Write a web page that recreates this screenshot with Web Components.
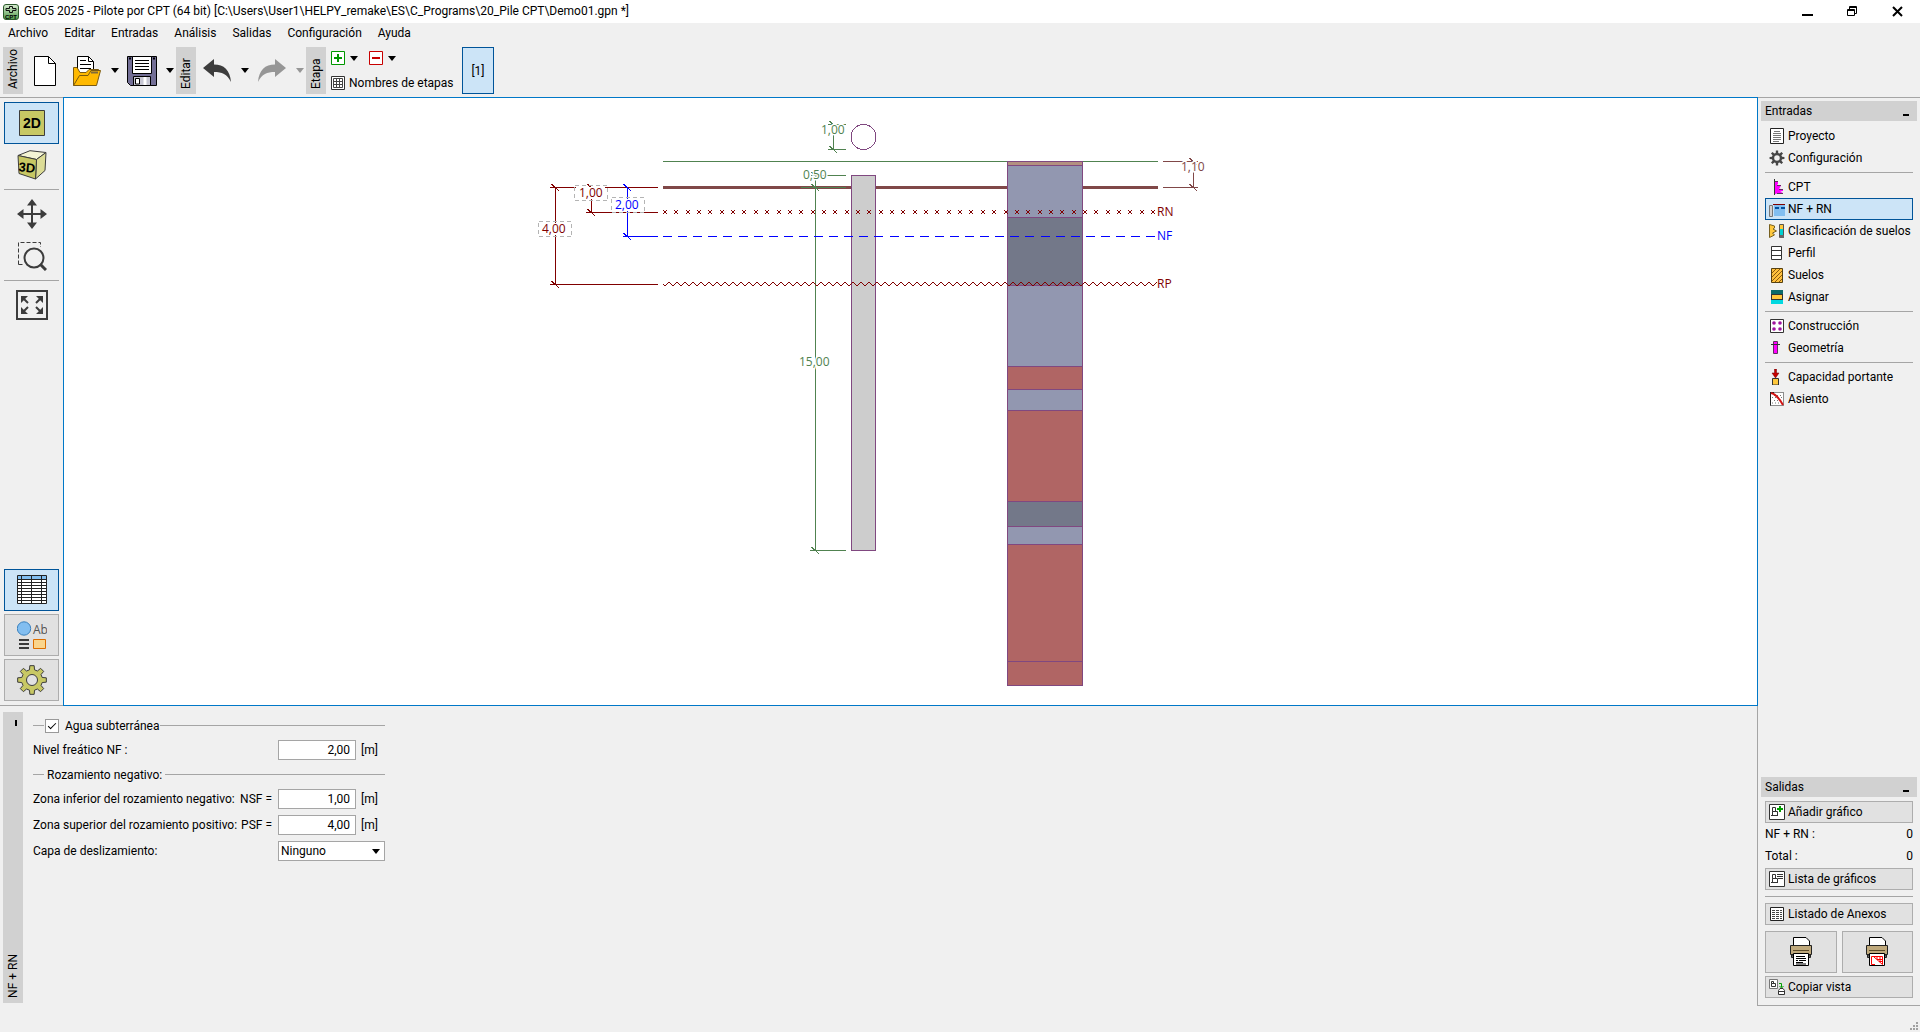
<!DOCTYPE html>
<html lang="es">
<head>
<meta charset="utf-8">
<title>GEO5 2025 - Pilote por CPT</title>
<style>
html,body{margin:0;height:100%}
body{font:12px/16px Roboto,"Open Sans",sans-serif;color:#000;background:#f0f0f0;overflow:hidden;
--line:#a5a5a5;--bar:#d1d1d1;--btn:#e1e1e1;--btn-line:#adadad;--sel:#cce4f7;--sel-line:#005499;--accent:#0078c8}
</style>
</head>
<body>
<geo-app></geo-app>
<script>
const gear=(c,ro,ri,n)=>{let p='';for(let i=0;i<n;i++){const a=i*2*Math.PI/n-Math.PI/2,s=Math.PI/n;
 [[-.62,ri],[-.38,ro],[.38,ro],[.62,ri]].forEach(([k,r])=>{p+=(p?'L':'M')+(c+r*Math.cos(a+k*s)).toFixed(2)+' '+(c+r*Math.sin(a+k*s)).toFixed(2)})}return p+'Z'};
const printer=inner=>`<path d="M4.5 9V.5H17L20.500 4V9" fill="#fff" stroke="#000"/><path d="M1.500 8.500H22.500V17.500H1.500Z" fill="#bfa97c" stroke="#222"/><path d="M4 13.500H20" stroke="#5a4a28"/><path d="M2.500 18V20.500H21.500V18Z" fill="#666" stroke="#222"/><path d="M4.500 16.500H19.500V28.500H4.500Z" fill="#fff" stroke="#000"/>${inner}`;
const ICONS={
app:[16,16,'<defs><linearGradient id="g" x2="0" y2="1"><stop offset="0" stop-color="#d9ecd2"/><stop offset="1" stop-color="#4f9a4a"/></linearGradient></defs><rect x=".5" y=".5" width="15" height="15" rx="2.500" fill="url(#g)" stroke="#2c5a2c"/><path d="M6.500 2.500H9.500V4.500H13M6.500 2.500V4.500H3V6.500H6.500V8.500H9.500V6.500H13V4.500" fill="none" stroke="#111"/><text x="8" y="14.500" font-size="6" font-weight="700" text-anchor="middle" font-family="Liberation Sans">CPT</text>'],
min:[11,11,'<path d="M0 9H11" stroke="#000" stroke-width="2"/>'],
restore:[11,11,'<path d="M.5 3.500H7.500V9.500H.5ZM.5 4.500H7.500M2.500 3V.5H9.500V7.500H8M2.500 1.500H9.500" fill="none" stroke="#000"/>'],
close:[11,11,'<path d="M1 1L10 10M10 1L1 10" stroke="#000" stroke-width="2"/>'],
caret:[8,5,'<path d="M0 0H8L4 5Z" fill="currentColor"/>'],
neu:[22,30,'<path d="M.5 .5H14.500L21.500 7.500V29.500H.5Z" fill="#fff" stroke="#000"/><path d="M14.500 .5V7.500H21.500" fill="none" stroke="#000"/>'],
open:[28,30,'<path d="M4.500 17V.5H15.500L20.500 5.500V17Z" fill="#fff" stroke="#000"/><path d="M15.500 .5V5.500H20.500M7 4.500H13M7 8.500H18M7 12.500H18" fill="none" stroke="#000"/><path d="M.5 29.500V11.500H4L7 16.500H13L16 13.500H25.500V18" fill="#ffb900" stroke="#7a5a10"/><path d="M.5 29.500L6.500 19.500H15L18 14.500H27.500L23.500 29.500Z" fill="#ffb900" stroke="#7a5a10"/><path d="M18 16.500H25" stroke="#806a3a" stroke-width="2"/>'],
save:[30,30,'<path d="M.5 .5H29.500V29.500H3.500L.5 26.500Z" fill="#736f96" stroke="#000"/><path d="M5.500 .5H24.500V17.500H5.500Z" fill="#fff" stroke="#000"/><path d="M8 4.500H22M8 7.500H22M8 10.500H22M8 13.500H22" stroke="#000"/><path d="M6.500 29.500V20.500H23.500V29.500Z" fill="#c8c8d4" stroke="#000"/><path d="M8.500 22.500H12.500V28H8.500Z" fill="#fff" stroke="#000"/><path d="M18 21V29" stroke="#fff" stroke-width="3"/><path d="M2 2.500H4M26 2.500H28" stroke="#000" stroke-width="2"/>'],
undo:[28,24,'<path d="M0 9L11 0V5.500C21 5.500 27 11 28 23C24 15 19 13 11 13V18Z" fill="#3c3c3c"/>'],
redo:[28,24,'<path d="M28 9L17 0V5.500C7 5.500 1 11 0 23C4 15 9 13 17 13V18Z" fill="#969696"/>'],
plus:[14,14,'<path d="M.5 .5H13.500V13.500H.5Z" fill="#fff" stroke="#009600"/><path d="M3 7H11M7 3V11" stroke="#009600" stroke-width="2"/>'],
minus:[14,14,'<path d="M.5 .5H13.500V13.500H.5Z" fill="#fff" stroke="#c80000"/><path d="M3 7H11" stroke="#c80000" stroke-width="2"/>'],
names:[14,14,'<path d="M.5 .5H13.500V13.500H.5Z" fill="#fff" stroke="#333"/><path d="M2.500 2.500H11.500V11.500H2.500ZM2.500 5.500H11.500M2.500 8.500H11.500M5.500 2.500V11.500M8.500 2.500V11.500" fill="none" stroke="#444"/>'],
d2:[26,26,'<path d="M.5 .5H25.500V25.500H.5Z" fill="#c8c864" stroke="#3c3c3c"/><text x="13" y="18" font-size="14" font-weight="700" text-anchor="middle" font-family="Liberation Sans">2D</text>'],
d3:[30,30,'<g stroke="#3c3c3c" stroke-linejoin="round"><path d="M1 5.500L13 .7L29 2.500L19.500 9.500Z" fill="#f4f4d4"/><path d="M19.500 9.500L29 2.500L28 20.500L18.500 29Z" fill="#dcdc96"/><path d="M1 5.500L19.500 9.500L18.500 29L2 23.500Z" fill="#c8c864"/></g><text x="10" y="22" font-size="13" font-weight="700" text-anchor="middle" font-family="Liberation Sans" transform="rotate(5 10 18)">3D</text>'],
move:[30,30,'<path d="M15 4V26M4 15H26" stroke="#3c3c3c" stroke-width="2"/><path d="M15 0L20 6.500H10ZM15 30L20 23.500H10ZM0 15L6.500 10V20ZM30 15L23.500 10V20Z" fill="#3c3c3c"/>'],
zoom:[30,30,'<path d="M1.500 23.500V1.500H23.500V6M1.500 23.500H7" fill="none" stroke="#3c3c3c" stroke-dasharray="4 2"/><circle cx="17" cy="17" r="9.500" fill="none" stroke="#3c3c3c" stroke-width="2"/><path d="M23 23L29 29" stroke="#3c3c3c" stroke-width="3"/>'],
fit:[32,30,'<path d="M1 1H31V29H1Z" fill="none" stroke="#3c3c3c" stroke-width="2"/><g fill="#3c3c3c"><path d="M5 6H12L5 13ZM27 6H20L27 13ZM5 24H12L5 17ZM27 24H20L27 17Z"/></g><path d="M7 8L12 13M25 8L20 13M7 22L12 17M25 22L20 17" stroke="#3c3c3c" stroke-width="2"/>'],
table:[30,30,'<path d="M.5 .5H29.500V28.500H.5Z" fill="#fff"/><path d="M1 1H29V5H1Z" fill="#82bef0"/><path d="M.5 .5H29.500V28.500H.5ZM.5 4.500H29.500M.5 7.500H29.500M.5 10.500H29.500M.5 13.500H29.500M.5 16.500H29.500M.5 19.500H29.500M.5 22.500H29.500M.5 25.500H29.500M4.500 .5V28.500M14.500 .5V28.500M24.500 .5V28.500" fill="none" stroke="#222"/>'],
style:[30,28,'<circle cx="7" cy="7.500" r="6.700" fill="#82bef0" stroke="#3c82be"/><text x="16" y="13" font-size="12" fill="#555" font-family="Open Sans">Ab</text><path d="M2 19H12M2 23H12M2 27H12" stroke="#3c3c3c" stroke-width="2"/><path d="M16.500 18.500H28.500V27.500H16.500Z" fill="#fad58c" stroke="#dc6e00"/>'],
gear:[30,30,`<path d="${gear(15,14.5,10.5,8)}" fill="#c8c864" stroke="#3c3c3c" stroke-linejoin="round"/><circle cx="15" cy="15" r="5.500" fill="#e1e1e1" stroke="#3c3c3c"/>`],
proyecto:[16,16,'<path d="M1.500 .5H14.500V15.500H1.500Z" fill="#fff" stroke="#222"/><path d="M5 3.500H11M4 5.500H12M4 7.500H12M4 9.500H12M4 11.500H12M4 13.500H10" stroke="#777"/>'],
config:[16,16,`<path fill-rule="evenodd" d="${gear(8,7.5,5.2,8)}M8 5.200A2.800 2.800 0 1 0 8 10.800A2.800 2.800 0 1 0 8 5.200Z" fill="#464646"/>`],
cpt:[16,16,'<path d="M5.500 0V16" stroke="#333"/><path d="M6 2L9 3V5L8 6L12 6.500L11 8.500L10 9.500L14 10.500V12L11 12.500L14 13.500L6 15Z" fill="#f0f"/><path d="M6 2.500H9M8 6.500H12M10 10.500H14M8 14.500H14" stroke="#603060" fill="none"/>'],
nf:[16,16,'<path d="M5 4H16V15H5Z" fill="#82bef0"/><path d="M.5 4.500H3.500V15.500H.5Z" fill="#d0d0d0" stroke="#777"/><path d="M4 3.500H16" stroke="#800000"/><path d="M6 7H10M12 7H16" stroke="#0050a0" stroke-width="2"/>'],
clasif:[16,16,'<path d="M.5 1.500L5.500 3V5L4 6L7.500 8L3.500 10L5.500 12L.5 14.500Z" fill="#ffc83c" stroke="#776020"/><path d="M11 1H15V6H11Z" fill="#ffc83c"/><path d="M11 6H15V12H11Z" fill="#00d2d2"/><path d="M10.500 1.500H14.500V14.500H10.500Z" fill="none" stroke="#555"/><path d="M11 12H15V15H11Z" fill="#666"/>'],
perfil:[16,16,'<path d="M2.500 1.500H12.500V14.500H2.500ZM2.500 5.500H12.500M2.500 10.500H12.500" fill="#fff" stroke="#333"/>'],
suelos:[16,16,'<path d="M2.500 1.500H13.500V15.500H2.500Z" fill="#ffc03c" stroke="#554010"/><path d="M3 6L7 2M3 10L11 2M3 14L13 4M6 15L13 8M10 15L13 12" stroke="#8a5a10"/>'],
asignar:[16,16,'<path d="M2.500 1.500H13.500V14.500H2.500Z" fill="#ffc83c" stroke="#333"/><path d="M2 1H14V5H2Z" fill="#0a6a6a"/><path d="M2 11H14V15H2Z" fill="#00d8e0"/><path d="M2 5.500H14M2 10.500H14" stroke="#333"/>'],
constr:[16,16,'<path d="M1.500 1.500H14.500V14.500H1.500Z" fill="#fff" stroke="#333"/><g fill="#a014a0"><circle cx="5" cy="5" r="1.800"/><circle cx="11" cy="5" r="1.800"/><circle cx="5" cy="11" r="1.800"/><circle cx="11" cy="11" r="1.800"/></g>'],
geom:[16,16,'<path d="M4.500 1.500H8.500V13.500H4.500Z" fill="#f0f" stroke="#603060"/><path d="M2 4.500H11" stroke="#333"/>'],
capac:[16,16,'<path d="M3.500 9.500H9.500V16H3.500Z" fill="#ffc83c" stroke="#333"/><path d="M5.500 0H7.500V4H10L6.500 9L3 4H5.500Z" fill="#c80000" stroke="#600" stroke-width=".5"/>'],
asiento:[16,16,'<path d="M1.500 1.500H14.500V14.500H1.500Z" fill="#fff" stroke="#222" stroke-dasharray="1 1"/><path d="M3 12H13M5 9.500H13M3 6.500H13M5 4.500H13" stroke="#777" stroke-dasharray="1 2"/><path d="M1.500 1V14.500M1 1.500H5" stroke="#222"/><path d="M2 2C7 3 10 7 14 14" fill="none" stroke="#d21414" stroke-width="2"/>'],
add:[16,16,'<path d="M.5 .5H15.500V15.500H.5Z" fill="#fff" stroke="#333"/><path d="M3.500 3.500H6.500V7.500H3.500ZM3.500 7.500H8.500V11.500H3.500ZM2 11.500H9" fill="none" stroke="#333"/><path d="M8 5H14M11 2V8" stroke="#00a000" stroke-width="2"/>'],
list:[16,16,'<path d="M.5 .5H15.500V15.500H.5Z" fill="#fff" stroke="#333"/><path d="M3.500 3.500H6.500V7.500H3.500ZM3.500 7.500H8.500V11.500H3.500ZM2 11.500H9M8 3.500H14M8 5.500H14M9 7.500H14" fill="none" stroke="#333"/>'],
anexos:[16,16,'<path d="M1.500 1.500H14.500V14.500H1.500Z" fill="#fff" stroke="#222"/><path d="M3 4.500H13M3 6.500H13M3 8.500H13M3 10.500H13M3 12.500H13" stroke="#444" stroke-dasharray="3 1"/>'],
print1:[24,30,printer('<path d="M7 19.500H16M7 21.500H17M7 23.500H9M10 23.500H17M7 25.500H14M7 27H17" stroke="#000"/>')],
print2:[24,30,printer('<path d="M10 19.500H6.500V27.500H10M8 19.500H17.500V27.500L9 20M12 20V22M15 20V25M12 22.500H17M14 24.500H17" fill="none" stroke="#f00"/>')],
copy:[16,16,'<path d="M.5 .5H8.500V9.500H.5Z" fill="#fff" stroke="#777"/><path d="M2.500 2.500H4.500V4.500H2.500ZM2.500 4.500H6.500V7.500H2.500Z" fill="none" stroke="#333"/><path d="M10 4.500H12.500V8M10.500 7L12.500 9L14.500 7" fill="none" stroke="#00a000"/><path d="M9.500 11.500L11 9.500H14L15.500 11.500V15.500H9.500ZM9.500 12.500H15.500" fill="#fff" stroke="#333"/>'],
grip:[9,9,'<path d="M6 0h2v2h-2zM3 3h2v2h-2zM6 3h2v2h-2zM0 6h2v2h-2zM3 6h2v2h-2zM6 6h2v2h-2z" fill="#a0a0a0"/>']
};
const define=(name,render)=>customElements.define(name,class extends HTMLElement{
 constructor(){super();this.attachShadow({mode:'open'})}
 connectedCallback(){this.shadowRoot.innerHTML=render(this)}
});

define('geo-icon',el=>{const [w,h,s]=ICONS[el.getAttribute('name')];
 return `<style>:host{display:inline-flex;flex:none}svg{display:block}</style><svg width="${w}" height="${h}" viewBox="0 0 ${w} ${h}" aria-hidden="true">${s}</svg>`});

define('geo-button',el=>`<style>
:host{display:flex}
button{flex:1;display:flex;align-items:center;justify-content:center;min-width:0;padding:0;font:inherit;color:inherit;background:none;border:1px solid transparent}
:host([raised]) button{background:var(--btn);border-color:var(--btn-line)}
:host([selected]) button{background:var(--sel);border-color:var(--sel-line)}
:host([dim]) button{color:#969696}
:host([row]){height:22px}
:host([row]) button{justify-content:flex-start;gap:3px;padding-left:3px;white-space:nowrap}
</style><button type="button" ${el.title?`aria-label="${el.title}"`:''}>${el.getAttribute('icon')?`<geo-icon name="${el.getAttribute('icon')}"></geo-icon>`:''}<slot></slot></button>`);

define('geo-titlebar',()=>`<style>
:host{display:flex;align-items:center;height:23px;background:#fff;padding-left:3px}
span{flex:1;padding-left:5px;line-height:23px;height:23px}
geo-button{width:45px;height:23px}
</style><geo-icon name="app"></geo-icon><span><slot></slot></span>
<geo-button icon="min" title="Minimizar"></geo-button><geo-button icon="restore" title="Restaurar"></geo-button><geo-button icon="close" title="Cerrar"></geo-button>`);

define('geo-menubar',()=>`<style>:host{display:flex;height:20px}button{font:inherit;border:0;background:none;padding:0 8px}</style>
${['Archivo','Editar','Entradas','Análisis','Salidas','Configuración','Ayuda'].map(t=>`<button type="button">${t}</button>`).join('')}`);

define('geo-vlabel',()=>`<style>:host{display:block;width:20px;box-sizing:border-box;background:var(--bar);writing-mode:vertical-rl;transform:rotate(180deg);line-height:20px;padding-top:5px;white-space:nowrap}</style><slot></slot>`);

define('geo-toolbar',()=>`<style>
:host{display:flex;height:47px;padding:4px 0 3px 3px}
.big{width:42px}.first{width:43px}.car{width:13px}
.stage{display:flex;flex-direction:column;gap:5px;padding:1px 0 0 4px;width:132px}
.stage div{display:flex;align-items:center;height:20px}
.stage .car{width:16px;margin-right:6px}
.one{width:32px}
.stage button{font:inherit;border:0;background:none;padding:0 1px;display:flex;align-items:center;gap:4px;white-space:nowrap}
</style>
<geo-vlabel>Archivo</geo-vlabel>
<geo-button class="first" icon="neu" title="Nuevo"></geo-button>
<geo-button class="big" icon="open" title="Abrir"></geo-button><geo-button class="car" icon="caret" title="Abrir reciente"></geo-button>
<geo-button class="big" icon="save" title="Guardar"></geo-button><geo-button class="car" icon="caret" title="Guardar como"></geo-button>
<geo-vlabel>Editar</geo-vlabel>
<geo-button class="big" icon="undo" title="Deshacer"></geo-button><geo-button class="car" icon="caret" title="Lista deshacer"></geo-button>
<geo-button class="big" icon="redo" title="Rehacer"></geo-button><geo-button class="car" dim icon="caret" title="Lista rehacer"></geo-button>
<geo-vlabel>Etapa</geo-vlabel>
<div class="stage"><div><geo-button icon="plus" title="Añadir etapa"></geo-button><geo-button class="car" icon="caret" title="Opciones"></geo-button><geo-button icon="minus" title="Quitar etapa"></geo-button><geo-button class="car" icon="caret" title="Opciones"></geo-button></div>
<div><button type="button"><geo-icon name="names"></geo-icon>Nombres de etapas</button></div></div>
<geo-button class="one" selected>[1]</geo-button>`);

define('geo-viewtools',()=>`<style>
:host{display:flex;flex-direction:column;box-sizing:border-box;width:63px;padding:4px;border:solid var(--line);border-width:1px 0}
geo-button{height:42px}
hr{margin:3px 0;border:0;height:1px;background:var(--line)}
.low{margin-top:auto;display:flex;flex-direction:column;gap:3px}
</style>
<geo-button selected icon="d2" title="Vista plana"></geo-button><geo-button icon="d3" title="Vista espacial"></geo-button><hr>
<geo-button icon="move" title="Mover"></geo-button><geo-button icon="zoom" title="Ampliar zona"></geo-button><hr>
<geo-button icon="fit" title="Ajustar"></geo-button>
<div class="low"><geo-button selected icon="table" title="Tabla"></geo-button><geo-button raised icon="style" title="Estilo"></geo-button><geo-button raised icon="gear" title="Ajustes"></geo-button></div>`);

define('geo-drawing',()=>{
 const tick=(x,y)=>`M${x-4} ${y-3.5}L${x+4} ${y+4}`;
 const G='#508250',R='#800000',B='#0000ff',W='#804848',P='#804880';
 const path=(d,c)=>`<path d="${d}" stroke="${c}" fill="none"/>`;
 const dim=(x,y1,y2,a,b,c)=>path(`M${x} ${y1}V${y2}M${a} ${y1}H${b}M${a} ${y2}H${b}${tick(x,y1)}${tick(x,y2)}`,c);
 const layers=[[161.5,'#b39080'],[165.5,'#9297b0'],[217.5,'#737889'],[285.5,'#9297b0'],[366.5,'#b06564'],[389.5,'#9297b0'],[410.5,'#b06564'],[501.5,'#737889'],[526.5,'#9297b0'],[544.5,'#b06564'],[661.5,'#b06564'],[685.5]];
 let col='';for(let i=0;i<layers.length-1;i++)col+=`<rect x="1007.5" y="${layers[i][0]}" width="75" height="${layers[i+1][0]-layers[i][0]}" fill="${layers[i][1]}" stroke="${P}"/>`;
 let xs='';for(let i=0;i<44;i++){const x=Math.round(665+i*11.35);xs+=`M${x-2} 210L${x+2} 214M${x+2} 210L${x-2} 214`}
 let z='M663 284L665 286';for(let x=669,u=1;x<1158;x+=4,u=!u)z+=`L${x} ${u?282:286}`;
 const t=(x,y,s,c)=>`<text x="${x}" y="${y}" fill="${c}">${s}</text>`;
 const box=(x,y)=>`<rect x="${x+2}" y="${y+2}" width="29" height="12" fill="#fff"/><rect x="${x}.5" y="${y}.5" width="33" height="15" fill="none" stroke="#b4b4b4" stroke-dasharray="4 3"/>`;
 return `<style>:host{display:block;background:#fff;border:1px solid var(--accent);overflow:hidden}svg{display:block;width:100%;height:100%}text{font:12px "Open Sans",sans-serif}.halo text{stroke:#fff;stroke-width:3px;paint-order:stroke}</style>
<svg viewBox="64 98 1693 607" role="img" aria-label="Pilote y perfil geológico"><g shape-rendering="crispEdges">
${path('M663 161.500H1158',G)}<path d="M663 187.500H1158" stroke="${W}" stroke-width="3"/>
<circle cx="863.500" cy="137" r="12.500" fill="#fff" stroke="${P}"/>
${dim(833.5,124.5,149.5,828,846,G)}${dim(815.5,187.5,550.5,810,846,G)}${path('M801 187.500H846M811 175.500H846M815.500 175V188'+tick(815.5,175.5),G)}
<rect x="851.500" y="175.500" width="24" height="375" fill="#cdcdcd" stroke="${P}"/>${col}
${dim(555.5,187.5,284.5,550,658,R)}${dim(591.5,187.5,212.5,586,658,R)}${path('M627.500 187V236.500M623 236.500H658'+tick(627.5,187.5)+tick(627.5,236.5),B)}
${dim(1193.5,161.5,187.5,1163,1198,W)}
${path(xs,R)}<path d="M663 236.500H1157" stroke="${B}" stroke-dasharray="9 6.1"/>${path(z,R)}
${box(538,221)}${box(574,185)}${box(611,197)}</g>
${t(542,233,'4,00',R)}${t(579,197,'1,00',R)}${t(615,209,'2,00',B)}<g class="halo">${t(821,134,'1,00',G)}${t(803,179,'0,50',G)}${t(799,366,'15,00',G)}${t(1181,171,'1,10',W)}</g>
${t(1157,216,'RN',R)}${t(1157,240,'NF',B)}${t(1157,288,'RP',R)}
</svg>`});

define('geo-form',()=>`<style>
:host{display:flex;height:300px;box-sizing:border-box;padding:6px 0 3px 3px}
.side{display:flex;flex-direction:column;align-items:center;background:var(--bar);width:20px}
.side i{width:2px;height:6px;background:#000;margin:8px 0 0 5px}
.side geo-vlabel{margin-top:auto}
form{display:flex;flex-direction:column;gap:6px;width:352px;padding:5px 0 0 10px}
.head{display:flex;align-items:center;height:17px}
.head::before,.head::after{content:"";height:1px;background:var(--line);width:11px}
.head::after{flex:1;width:auto}
.head label{display:flex;align-items:center;gap:6px;margin:0 1px}
.head span{margin:0 3px}
.row{display:flex;align-items:center;height:20px}
.row label{flex:1;display:flex;justify-content:space-between;margin-right:6px;white-space:nowrap}
.row i{font-style:normal;width:24px;padding-left:5px}
input,select{font:inherit;color:#000;margin:0;box-sizing:border-box;height:20px;background:#fff;border:1px solid var(--line);border-radius:0}
input.n{width:78px;text-align:right;padding:0 5px}
input[type=checkbox]{appearance:none;width:14px;height:14px;border-color:#999;display:grid;place-items:center}
input[type=checkbox]:checked::before{content:"";width:7px;height:3px;border:solid #000;border-width:0 0 1px 1px;transform:rotate(-45deg);margin-bottom:2px}
.pick{position:relative;width:107px}
select{appearance:none;width:100%;padding:0 2px}
.pick geo-icon{position:absolute;right:5px;top:8px;pointer-events:none}
</style>
<div class="side"><i></i><geo-vlabel>NF + RN</geo-vlabel></div>
<form>
<div class="head"><label><input type="checkbox" checked>Agua subterránea</label></div>
<div class="row"><label for="nf">Nivel freático NF :</label><input class="n" id="nf" value="2,00"><i>[m]</i></div>
<div class="head"><span>Rozamiento negativo:</span></div>
<div class="row"><label for="nsf"><span>Zona inferior del rozamiento negativo:</span><span>NSF =</span></label><input class="n" id="nsf" value="1,00"><i>[m]</i></div>
<div class="row"><label for="psf"><span>Zona superior del rozamiento positivo:</span><span>PSF =</span></label><input class="n" id="psf" value="4,00"><i>[m]</i></div>
<div class="row"><label for="capa">Capa de deslizamiento:</label><div class="pick"><select id="capa"><option>Ninguno</option></select><geo-icon name="caret"></geo-icon></div></div>
</form>`);

define('geo-panel',()=>`<style>
:host{display:block}
header{display:flex;justify-content:space-between;align-items:center;height:20px;background:var(--bar);padding:0 8px 0 4px}
header i{width:6px;height:2px;background:#000;margin-top:7px}
section{display:flex;flex-direction:column;padding:4px 4px 0}
</style><header><slot name="title"></slot><i></i></header><section><slot></slot></section>`);

define('geo-sidebar',()=>`<style>
:host{display:flex;flex-direction:column;justify-content:space-between;box-sizing:border-box;width:163px;padding:3px 3px 7px;border:solid var(--line);border-width:1px 0 1px 1px}
hr{border:0;height:1px;background:var(--line);margin:3px 0;width:100%}
.count{display:flex;justify-content:space-between;align-items:center;height:22px}
.after{margin-top:1px}.wide{margin:6px 0}
.print{display:flex;gap:5px;margin:6px 0 3px}.print geo-button{flex:1;height:42px}
</style>
<geo-panel><span slot="title">Entradas</span>
<geo-button row icon="proyecto">Proyecto</geo-button><geo-button row icon="config">Configuración</geo-button><hr>
<geo-button row icon="cpt">CPT</geo-button><geo-button row selected icon="nf">NF + RN</geo-button><geo-button row icon="clasif">Clasificación de suelos</geo-button><geo-button row icon="perfil">Perfil</geo-button><geo-button row icon="suelos">Suelos</geo-button><geo-button row icon="asignar">Asignar</geo-button><hr>
<geo-button row icon="constr">Construcción</geo-button><geo-button row icon="geom">Geometría</geo-button><hr>
<geo-button row icon="capac">Capacidad portante</geo-button><geo-button row icon="asiento">Asiento</geo-button>
</geo-panel>
<geo-panel><span slot="title">Salidas</span>
<geo-button row raised icon="add">Añadir gráfico</geo-button>
<div class="count"><span>NF + RN :</span><span>0</span></div><div class="count"><span>Total :</span><span>0</span></div>
<geo-button class="after" row raised icon="list">Lista de gráficos</geo-button><hr class="wide">
<geo-button row raised icon="anexos">Listado de Anexos</geo-button>
<div class="print"><geo-button raised icon="print1" title="Imprimir informe"></geo-button><geo-button raised icon="print2" title="Imprimir vista"></geo-button></div>
<geo-button row raised icon="copy">Copiar vista</geo-button>
</geo-panel>`);

define('geo-app',()=>`<style>
:host{display:flex;flex-direction:column;height:100vh}
.body{flex:1;display:flex;min-height:0}
.left{flex:1;display:flex;flex-direction:column;min-width:0}
.work{flex:1;display:flex;min-height:0;margin-right:-1px;z-index:1}
geo-drawing{flex:1;min-width:0}
footer{height:26px;display:flex;justify-content:flex-end;align-items:flex-end;padding:0 1px 1px;box-sizing:border-box}
</style>
<geo-titlebar>GEO5 2025 - Pilote por CPT (64 bit) [C:\\Users\\User1\\HELPY_remake\\ES\\C_Programs\\20_Pile CPT\\Demo01.gpn *]</geo-titlebar>
<geo-menubar></geo-menubar><geo-toolbar></geo-toolbar>
<div class="body"><div class="left"><div class="work"><geo-viewtools></geo-viewtools><geo-drawing></geo-drawing></div><geo-form></geo-form></div><geo-sidebar></geo-sidebar></div>
<footer><geo-icon name="grip"></geo-icon></footer>`);
</script>
</body>
</html>
